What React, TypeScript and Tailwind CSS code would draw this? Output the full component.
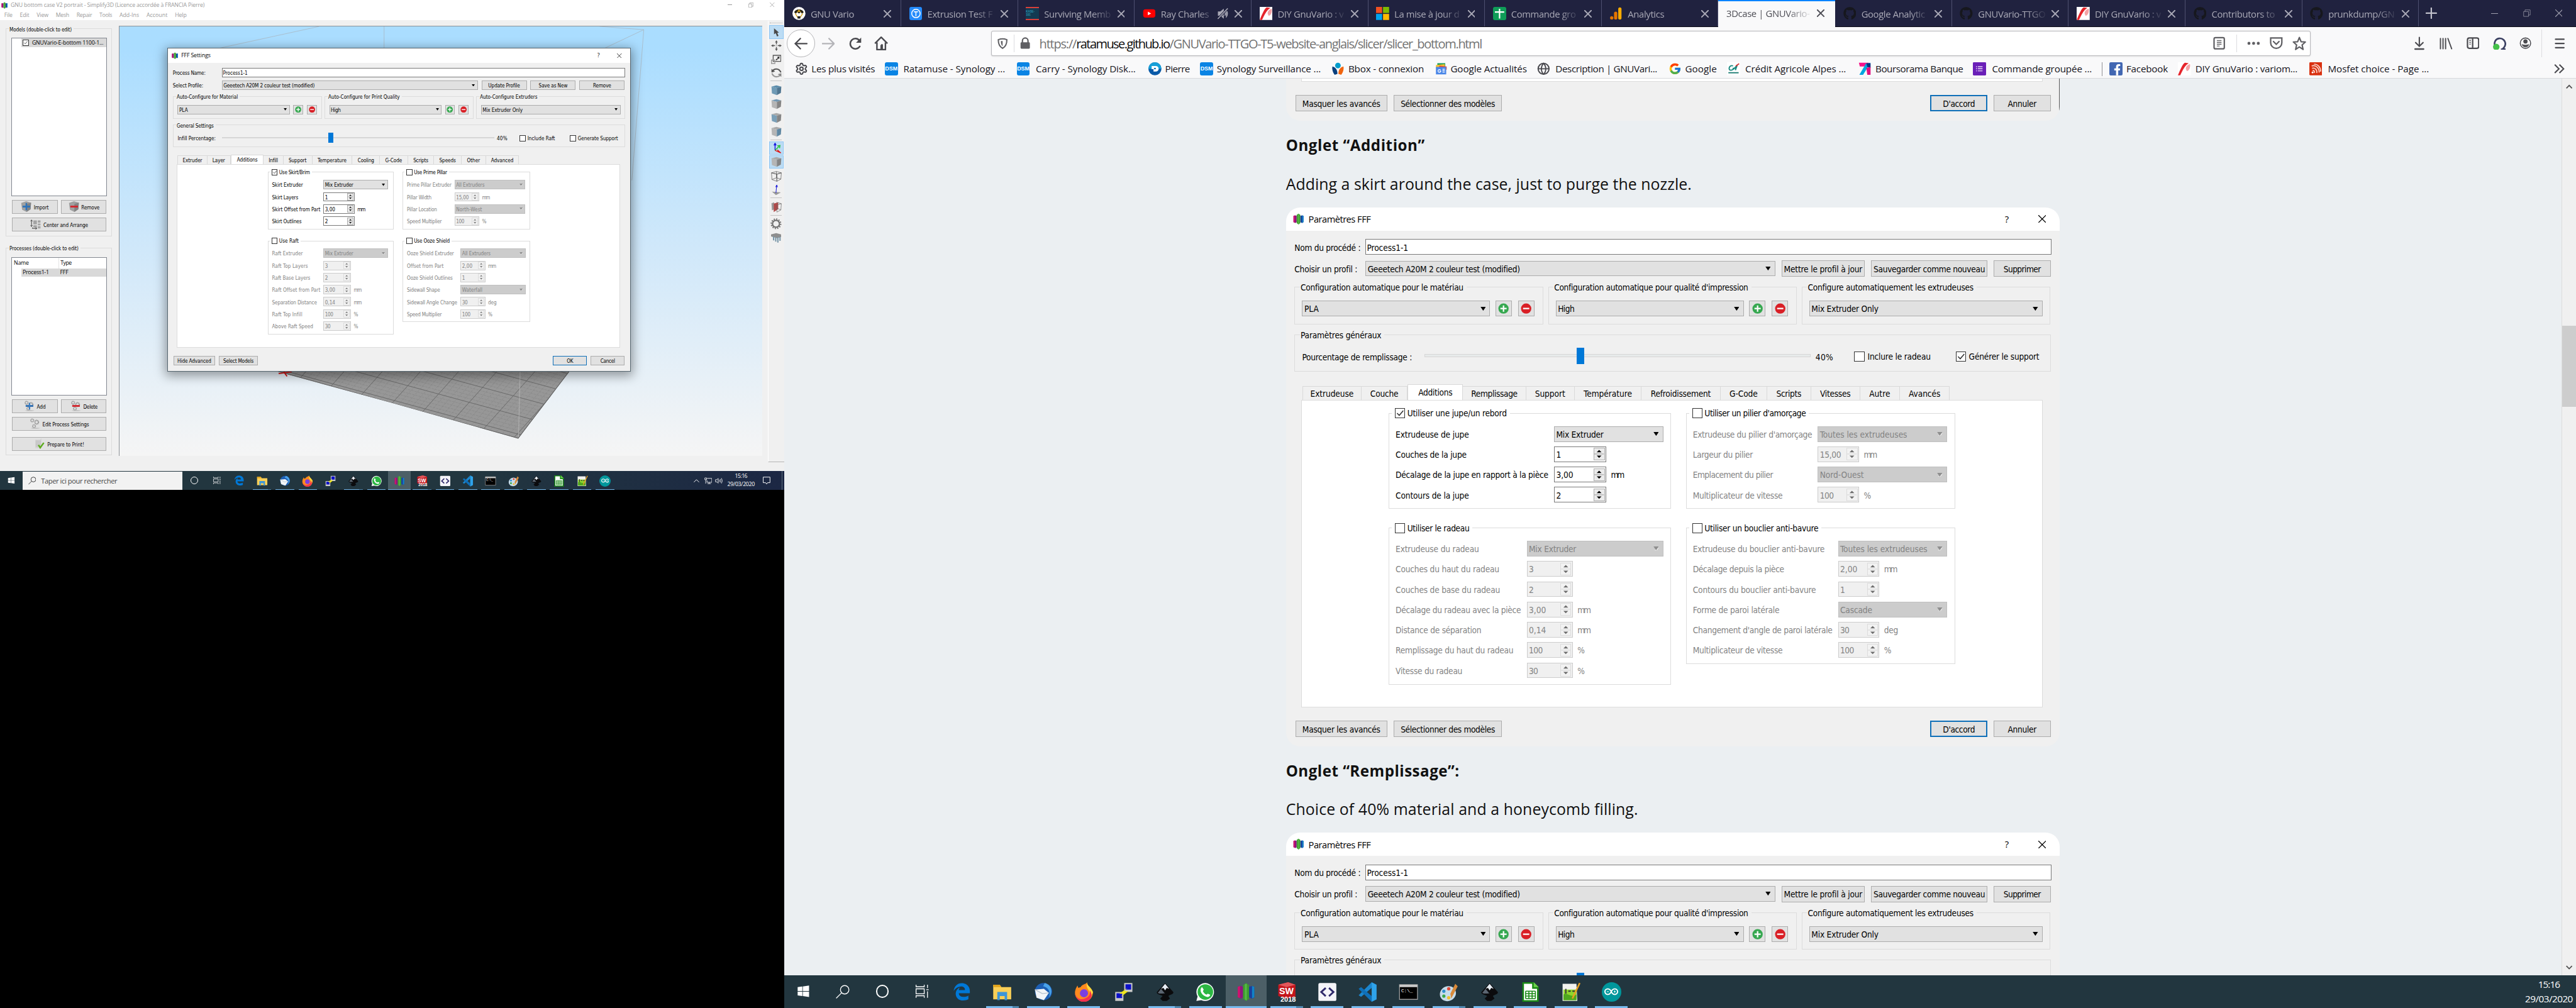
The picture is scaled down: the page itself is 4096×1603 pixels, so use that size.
import React from "react";
import type { ReactNode } from "react";
import { FaWindows, FaGithub, FaEdgeLegacy, FaFacebookF } from "react-icons/fa";
import { FcGoogle } from "react-icons/fc";
import { SiArduino } from "react-icons/si";
import { Globe, Settings } from "lucide-react";

/* ---------- text that is tracked to an exact width ---------- */

const FONTS = {
  ui: { size: 11, css: "'DejaVu Sans Condensed','DejaVu Sans',sans-serif", weight: "", cls: "text-[11px] font-['DejaVu_Sans_Condensed','DejaVu_Sans',sans-serif] [font-stretch:condensed]" },
  seg12: { size: 11.8, css: "'Open Sans',sans-serif", weight: "", cls: "text-[11.8px] font-['Open_Sans',sans-serif]" },
  seg15: { size: 15, css: "'Open Sans',sans-serif", weight: "", cls: "text-[15px] font-['Open_Sans',sans-serif]" },
  seg21: { size: 20.5, css: "'Open Sans',sans-serif", weight: "", cls: "text-[20.5px] font-['Open_Sans',sans-serif]" },
  seg28: { size: 27, css: "'Open Sans',sans-serif", weight: "", cls: "text-[27px] font-['Open_Sans',sans-serif]" },
  body: { size: 33.5, css: "'Open Sans',sans-serif", weight: "", cls: "text-[33.5px] font-['Open_Sans',sans-serif]" },
  head: { size: 32.5, css: "'Open Sans',sans-serif", weight: "bold ", cls: "text-[32.5px] font-bold font-['Open_Sans',sans-serif]" },
};
type FontKey = keyof typeof FONTS;

const ctx = document.createElement("canvas").getContext("2d")!;
function tracking(t: string, w: number, f: FontKey) {
  const font = FONTS[f];
  ctx.font = `${font.weight}100px ${font.css}`;
  const natural = (ctx.measureText(t).width * font.size) / 100;
  return (w - natural) / t.length;
}

type Txt = [string, number];
function T({ v, f = "ui", className = "" }: { v: Txt; f?: FontKey; className?: string }) {
  return (
    <span
      className={`block shrink-0 whitespace-pre leading-[1.25] ${FONTS[f].cls} ${className}`}
      style={{ letterSpacing: `${tracking(v[0], v[1], f)}px` }}
    >
      {v[0]}
    </span>
  );
}

/* ---------- small widgets ---------- */

function S3D({ className = "" }: { className?: string }) {
  return (
    <svg viewBox="0 0 24 24" className={className}>
      <path d="M1 5 5 4 8 5V19L5 21 1 19Z" fill="#8c1580" />
      <path d="M1 5 4 4V20L1 19Z" fill="#d0146e" />
      <path d="M16 5 20 4 23 5V19L20 21 16 19Z" fill="#1b3f9c" />
      <path d="M20 4 23 5V19L20 20.500Z" fill="#1184c8" />
      <path d="M8 3 12 0 16 3V21L12 24 8 21Z" fill="#3c9c2e" />
      <path d="M10.500 1.500 13 1V23.500L10.500 22Z" fill="#58b848" />
    </svg>
  );
}

function Tri({ off = false, className = "" }: { off?: boolean; className?: string }) {
  return (
    <svg viewBox="0 0 8 6" className={`h-[5px] w-[7px] shrink-0 ${className}`}>
      {off && <path d="M1.500 6H5L8.500 1Z" fill="#fff" />}
      <path d="M0 0H8L4 6Z" fill={off ? "#8f8f8f" : "#000"} />
    </svg>
  );
}

function Combo({ v, className = "", off = false }: { v: Txt; className?: string; off?: boolean }) {
  return (
    <div className={`flex h-[20px] shrink-0 items-center justify-between border pr-[5px] pl-[2px] ${off ? "border-[#bfbfbf] bg-[#cccccc] text-[#838383]" : "border-[#adadad] bg-[#e1e1e1] text-black"} ${className}`}>
      <T v={v} className="mt-[2px]" />
      <Tri off={off} />
    </div>
  );
}

function Spin({ v, className = "", off = false }: { v: Txt; className?: string; off?: boolean }) {
  const c = off ? "#6d6d6d" : "#000";
  return (
    <div className={`flex h-[20px] shrink-0 items-center justify-between border pr-[1px] pl-[2px] ${off ? "border-[#cccccc] bg-[#f0f0f0] text-[#838383]" : "border-[#7a7a7a] bg-white text-black"} ${className}`}>
      <T v={v} className="mt-[2px]" />
      <div className={`flex h-[16px] w-[14px] flex-col border ${off ? "border-[#dcdcdc] bg-[#f2f2f2]" : "border-[#adadad] bg-[#ebebeb]"}`}>
        <svg viewBox="0 0 12 14" className="h-full w-full">
          <path d="M3 5 6 2 9 5Z M3 9 6 12 9 9Z" fill={c} />
          <path d="M0 7H12" stroke={off ? "#dcdcdc" : "#adadad"} />
        </svg>
      </div>
    </div>
  );
}

function Check({ on = false }: { on?: boolean }) {
  return (
    <div className="h-[13px] w-[13px] shrink-0 border border-[#333] bg-white">
      {on && (
        <svg viewBox="0 0 12 12" className="h-full w-full">
          <path d="M2 6 5 9 10.500 2.500" fill="none" stroke="#333" strokeWidth="1.300" />
        </svg>
      )}
    </div>
  );
}

function Btn({ v, className = "", primary = false }: { v: Txt; className?: string; primary?: boolean }) {
  return (
    <div className={`flex h-[21px] shrink-0 items-center justify-center bg-[#e1e1e1] ${primary ? "border-2 border-[#0f6fb8]" : "border border-[#adadad]"} ${className}`}>
      <T v={v} className="mt-[2px]" />
    </div>
  );
}

function RoundBtn({ kind }: { kind: "plus" | "minus" }) {
  return (
    <div className="flex h-[20px] w-[21px] shrink-0 items-center justify-center border border-[#adadad] bg-[#e1e1e1]">
      <svg viewBox="0 0 14 14" className="h-[14px] w-[14px]">
        <circle cx="7" cy="7" r="6.600" fill={kind === "plus" ? "#36a850" : "#d91f26"} />
        <path d={kind === "plus" ? "M3 7H11M7 3V11" : "M3 7H11"} stroke="#fff" strokeWidth="1.800" />
      </svg>
    </div>
  );
}

/* Group box whose caption sits on the top border. */
function Group({ v, className = "", bg = "bg-[#f0f0f0]", children, check }: { v: Txt; className?: string; bg?: string; children?: ReactNode; check?: boolean }) {
  const boxed = check !== undefined;
  return (
    <div className={`flex shrink-0 flex-col border border-[#dcdcdc] ${className}`}>
      <div className={`-mt-[8px] flex h-[15px] w-fit items-center gap-[3px] pr-[4px] ${bg} ${boxed ? "ml-[3px] pl-[4px]" : "ml-[6px] pl-[1px]"}`}>
        {boxed && <Check on={check} />}
        <T v={v} className={boxed ? "mt-[1px]" : "mt-[2px]"} />
      </div>
      {children}
    </div>
  );
}

type Row = { l: Txt; v: Txt; k?: "combo"; u?: Txt };
function OptionGroup({ title, on, rows, box, label, combo, spin }: { title: Txt; on?: boolean; rows: Row[]; box: string; label: string; combo: string; spin: string }) {
  const off = !on;
  return (
    <Group v={title} check={!!on} bg="bg-white" className={box}>
      <div className={`mt-[9px] flex flex-col gap-[6px] pl-[8px] ${off ? "text-[#838383]" : "text-black"}`}>
        {rows.map((r) => (
          <div key={r.l[0]} className="flex h-[20px] items-center">
            <div className={`shrink-0 ${label}`}>
              <T v={r.l} className="mt-[2px]" />
            </div>
            {r.k ? <Combo v={r.v} off={off} className={combo} /> : <Spin v={r.v} off={off} className={spin} />}
            {r.u && <T v={r.u} className="mt-[2px] ml-[6px]" />}
          </div>
        ))}
      </div>
    </Group>
  );
}

const MM: Txt = ["mm", 15.8];
const PC: Txt = ["%", 10];
const N = { one: ["1", 6] as Txt, two: ["2", 6] as Txt, three: ["3", 6] as Txt, t3: ["3,00", 22] as Txt, t2: ["2,00", 22] as Txt, sep: ["0,14", 22] as Txt, hun: ["100", 17.5] as Txt, thirty: ["30", 11.5] as Txt, fifteen: ["15,00", 27] as Txt };
const MIX: Txt = ["Mix Extruder", 60.7];

const EN = {
  title: ["FFF Settings", 63] as Txt,
  name: ["Process Name:", 70] as Txt,
  profile: ["Select Profile:", 65] as Txt,
  lw: "w-[105px]",
  b: [["Update Profile", 68], ["Save as New", 61.6], ["Remove", 38.6]] as Txt[],
  bw: ["w-[97px]", "w-[97px]", "w-[97px]"],
  g: [["Auto-Configure for Material", 131], ["Auto-Configure for Print Quality", 153], ["Auto-Configure Extruders", 123]] as Txt[],
  gen: ["General Settings", 79] as Txt,
  infill: ["Infill Percentage:", 81.4] as Txt,
  iw: "w-[95px]", sw: "w-[583px]", knob: "ml-[227px]",
  inc: ["Include Raft", 59] as Txt, incM: "ml-[26px]",
  sup: ["Generate Support", 86] as Txt, supM: "ml-[32px]", supOn: false,
  tabs: [["Extruder", 42, "w-[64px]"], ["Layer", 27, "w-[50px]"], ["Additions", 44, "w-[71px]"], ["Infill", 20, "w-[42px]"], ["Support", 38, "w-[62px]"], ["Temperature", 62, "w-[86px]"], ["Cooling", 35, "w-[59px]"], ["G-Code", 36, "w-[60px]"], ["Scripts", 32, "w-[56px]"], ["Speeds", 35.4, "w-[59px]"], ["Other", 28, "w-[52px]"], ["Advanced", 48, "w-[71px]"]] as [string, number, string][],
  cols: "pl-[193px] gap-[19px]",
  skirt: {
    title: ["Use Skirt/Brim", 66] as Txt, on: true, box: "w-[270px] h-[123px]", label: "w-[110px]", combo: "w-[139px]", spin: "w-[67px]",
    rows: [{ l: ["Skirt Extruder", 66], v: MIX, k: "combo" }, { l: ["Skirt Layers", 56], v: N.one }, { l: ["Skirt Offset from Part", 103.4], v: N.t3, u: MM }, { l: ["Skirt Outlines", 63], v: N.two }] as Row[],
  },
  raft: {
    title: ["Use Raft", 42.3] as Txt, box: "w-[270px] h-[201px]", label: "w-[110px]", combo: "w-[139px]", spin: "w-[59px]",
    rows: [{ l: ["Raft Extruder", 66], v: MIX, k: "combo" }, { l: ["Raft Top Layers", 77], v: N.three }, { l: ["Raft Base Layers", 82], v: N.two }, { l: ["Raft Offset from Part", 103.4], v: N.t3, u: MM }, { l: ["Separation Distance", 96], v: N.sep, u: MM }, { l: ["Raft Top Infill", 65], v: N.hun, u: PC }, { l: ["Above Raft Speed", 88], v: N.thirty, u: PC }] as Row[],
  },
  prime: {
    title: ["Use Prime Pillar", 71] as Txt, box: "w-[274px] h-[123px]", label: "w-[102px]", combo: "w-[152px]", spin: "w-[53px]",
    rows: [{ l: ["Prime Pillar Extruder", 95.3], v: ["All Extruders", 61], k: "combo" }, { l: ["Pillar Width", 52.5], v: N.fifteen, u: MM }, { l: ["Pillar Location", 64.3], v: ["North-West", 55.7], k: "combo" }, { l: ["Speed Multiplier", 74.5], v: N.hun, u: PC }] as Row[],
  },
  ooze: {
    title: ["Use Ooze Shield", 76.6] as Txt, box: "w-[274px] h-[175px]", label: "w-[115px]", combo: "w-[140px]", spin: "w-[53px]",
    rows: [{ l: ["Ooze Shield Extruder", 100.7], v: ["All Extruders", 61], k: "combo" }, { l: ["Offset from Part", 78.7], v: N.t2, u: MM }, { l: ["Ooze Shield Outlines", 98], v: N.one }, { l: ["Sidewall Shape", 70.7], v: ["Waterfall", 43.4], k: "combo" }, { l: ["Sidewall Angle Change", 107.7], v: N.thirty, u: ["deg", 18] }, { l: ["Speed Multiplier", 74.5], v: N.hun, u: PC }] as Row[],
  },
  foot: [["Hide Advanced", 72.3], ["Select Models", 65], ["OK", 13.4], ["Cancel", 31]] as Txt[],
  fw: ["w-[90px]", "w-[83px] ml-[8px]"],
};

const FR: typeof EN = {
  title: ["Paramètres FFF", 79.6],
  name: ["Nom du procédé :", 84.8],
  profile: ["Choisir un profil :", 80.7],
  lw: "w-[91px]",
  b: [["Mettre le profil à jour", 100.6], ["Sauvegarder comme nouveau", 143], ["Supprimer", 47.7]],
  bw: ["w-[107px]", "w-[149px]", "w-[73px]"],
  g: [["Configuration automatique pour le matériau", 209], ["Configuration automatique pour qualité d'impression", 249], ["Configure automatiquement les extrudeuses", 212.8]],
  gen: ["Paramètres généraux", 103.7],
  infill: ["Pourcentage de remplissage :", 141],
  iw: "w-[157px]", sw: "w-[495px]", knob: "ml-[194px]",
  inc: ["Inclure le radeau", 81], incM: "ml-[27px]",
  sup: ["Générer le support", 90.3], supM: "ml-[32px]", supOn: true,
  tabs: [["Extrudeuse", 55.3, "w-[76px]"], ["Couche", 36, "w-[59px]"], ["Additions", 43.6, "w-[71px]"], ["Remplissage", 59.4, "w-[81px]"], ["Support", 38.8, "w-[62px]"], ["Température", 62, "w-[86px]"], ["Refroidissement", 77, "w-[101px]"], ["G-Code", 36, "w-[60px]"], ["Scripts", 32, "w-[56px]"], ["Vitesses", 39, "w-[63px]"], ["Autre", 26.8, "w-[51px]"], ["Avancés", 40.5, "w-[64px]"]],
  cols: "pl-[111px] gap-[19px]",
  skirt: {
    title: ["Utiliser une jupe/un rebord", 127.6], on: true, box: "w-[362px] h-[123px]", label: "w-[203px]", combo: "w-[140px]", spin: "w-[67px]",
    rows: [{ l: ["Extrudeuse de jupe", 94], v: MIX, k: "combo" }, { l: ["Couches de la jupe", 91], v: N.one }, { l: ["Décalage de la jupe en rapport à la pièce", 195.9], v: N.t3, u: MM }, { l: ["Contours de la jupe", 94], v: N.two }],
  },
  raft: {
    title: ["Utiliser le radeau", 79.7], box: "w-[362px] h-[201px]", label: "w-[168px]", combo: "w-[175px]", spin: "w-[59px]",
    rows: [{ l: ["Extrudeuse du radeau", 107], v: MIX, k: "combo" }, { l: ["Couches du haut du radeau", 133], v: N.three }, { l: ["Couches de base du radeau", 134], v: N.two }, { l: ["Décalage du radeau avec la pièce", 160.8], v: N.t3, u: MM }, { l: ["Distance de séparation", 110], v: N.sep, u: MM }, { l: ["Remplissage du haut du radeau", 151], v: N.hun, u: PC }, { l: ["Vitesse du radeau", 85.6], v: N.thirty, u: PC }],
  },
  prime: {
    title: ["Utiliser un pilier d'amorçage", 130], box: "w-[345px] h-[123px]", label: "w-[160px]", combo: "w-[166px]", spin: "w-[53px]",
    rows: [{ l: ["Extrudeuse du pilier d'amorçage", 153], v: ["Toutes les extrudeuses", 112], k: "combo" }, { l: ["Largeur du pilier", 76.8], v: N.fifteen, u: MM }, { l: ["Emplacement du pilier", 102.7], v: ["Nord-Ouest", 56.4], k: "combo" }, { l: ["Multiplicateur de vitesse", 115], v: N.hun, u: PC }],
  },
  ooze: {
    title: ["Utiliser un bouclier anti-bavure", 146], box: "w-[345px] h-[175px]", label: "w-[186px]", combo: "w-[140px]", spin: "w-[53px]",
    rows: [{ l: ["Extrudeuse du bouclier anti-bavure", 169], v: ["Toutes les extrudeuses", 112], k: "combo" }, { l: ["Décalage depuis la pièce", 117], v: N.t2, u: MM }, { l: ["Contours du bouclier anti-bavure", 158], v: N.one }, { l: ["Forme de paroi latérale", 111], v: ["Cascade", 41], k: "combo" }, { l: ["Changement d'angle de paroi latérale", 179], v: N.thirty, u: ["deg", 18] }, { l: ["Multiplicateur de vitesse", 115], v: N.hun, u: PC }],
  },
  foot: [["Masquer les avancés", 100], ["Sélectionner des modèles", 121], ["D'accord", 41], ["Annuler", 36.7]],
  fw: ["w-[118px]", "w-[139px] ml-[8px]"],
};

function CloseX({ className = "" }: { className?: string }) {
  return (
    <svg viewBox="0 0 10 10" className={className}>
      <path d="M0 0 10 10M10 0 0 10" stroke="currentColor" strokeWidth="1" fill="none" />
    </svg>
  );
}

function DialogTop({ d }: { d: typeof EN }) {
  return (
    <>
      <div className="flex h-[30px] shrink-0 items-center bg-white pl-[9px]">
        <S3D className="h-[15px] w-[14px]" />
        <T v={d.title} f="seg12" className="ml-[6px]" />
        <span className="ml-auto w-[8px] text-center font-['Open_Sans',sans-serif] text-[12px] leading-none">?</span>
        <CloseX className="mr-[18px] ml-[36px] h-[10px] w-[10px]" />
      </div>
      <div className="mt-[11px] flex h-[20px] shrink-0 items-center pr-[11px] pl-[11px]">
        <T v={d.name} className={`mt-[2px] ${d.lw}`} />
        <div className="flex h-full flex-1 items-center border border-[#7a7a7a] bg-white pl-[1px]">
          <T v={["Process1-1", 53]} className="mt-[2px]" />
        </div>
      </div>
      <div className="mt-[7px] flex h-[21px] shrink-0 items-center gap-[8px] pr-[12px] pl-[11px]">
        <div className={`-mr-[8px] shrink-0 ${d.lw}`}>
          <T v={d.profile} className="mt-[2px]" />
        </div>
        <Combo v={["Geeetech A20M 2 couleur test (modified)", 195.5]} className="flex-1" />
        {d.b.map((b, i) => (
          <Btn key={b[0]} v={b} className={d.bw[i]} />
        ))}
      </div>
      <div className="mt-[13px] flex h-[48px] shrink-0 gap-[6px] pl-[11px]">
        {d.g.map((g, i) => (
          <Group key={g[0]} v={g} className="h-[48px] w-[319px]">
            <div className="mt-[10px] flex items-center pl-[9px]">
              <Combo v={i === 0 ? ["PLA", 18.5] : i === 1 ? ["High", 21] : ["Mix Extruder Only", 86]} className={i < 2 ? "w-[241px]" : "w-[299px]"} />
              {i < 2 && (
                <div className="ml-[7px] flex gap-[8px]">
                  <RoundBtn kind="plus" />
                  <RoundBtn kind="minus" />
                </div>
              )}
            </div>
          </Group>
        ))}
      </div>
      <Group v={d.gen} className="mt-[13px] ml-[11px] h-[48px] w-[969px]">
        <div className="mt-[7px] flex h-[27px] items-center pl-[9px]">
          <div className={`shrink-0 ${d.iw}`}>
            <T v={d.infill} className="mt-[2px]" />
          </div>
          <div className={`-mt-[2px] flex h-[4px] shrink-0 items-center border border-[#d6d6d6] bg-[#e7eaea] ${d.sw}`}>
            <div className={`h-[21px] w-[10px] shrink-0 bg-[#0078d7] ${d.knob}`} />
          </div>
          <T v={["40%", 22.7]} className="mt-[2px] ml-[6px]" />
          <div className={`flex items-center gap-[4px] ${d.incM}`}>
            <Check />
            <T v={d.inc} className="mt-[1px]" />
          </div>
          <div className={`flex items-center gap-[4px] ${d.supM}`}>
            <Check on={d.supOn} />
            <T v={d.sup} className="mt-[1px]" />
          </div>
        </div>
      </Group>
    </>
  );
}

function DialogTabs({ d }: { d: typeof EN }) {
  return (
    <>
      <div className="mt-[16px] flex h-[21px] shrink-0 items-end pl-[21px]">
        {d.tabs.map(([t, w, cls], i) => (
          <div key={t} className={`flex shrink-0 items-center justify-center border-t border-[#d9d9d9] ${i === 2 ? "h-[21px] border-r border-l bg-white pb-[1px]" : "h-[19px] border-r bg-[#f0f0f0]"} ${i === 0 ? "border-l" : ""} ${cls}`}>
            <T v={[t, w]} className="mt-[1px]" />
          </div>
        ))}
      </div>
      <div className={`-mt-px ml-[20px] flex h-[394px] w-[950px] shrink-0 border border-[#dcdcdc] bg-white pt-[16px] ${d.cols}`}>
        <div className="flex flex-col gap-[24px]">
          <OptionGroup {...d.skirt} />
          <OptionGroup {...d.raft} />
        </div>
        <div className="flex flex-col gap-[24px]">
          <OptionGroup {...d.prime} />
          <OptionGroup {...d.ooze} />
        </div>
      </div>
    </>
  );
}

function DialogFoot({ d }: { d: typeof EN }) {
  return (
    <div className="mt-[17px] flex pr-[12px] pl-[12px]">
      <Btn v={d.foot[0]} className={d.fw[0]} />
      <Btn v={d.foot[1]} className={d.fw[1]} />
      <div className="ml-auto flex gap-[8px]">
        <Btn v={d.foot[2]} primary className="w-[73px]" />
        <Btn v={d.foot[3]} className="w-[73px]" />
      </div>
    </div>
  );
}

function Dialog({ className = "", children }: { className?: string; children: ReactNode }) {
  return <div className={`flex w-[992px] shrink-0 flex-col overflow-hidden bg-[#f0f0f0] text-black ${className}`}>{children}</div>;
}

/* ---------- slicer main window ---------- */

function Cube({ top = "#a9a9a9", left = "#b5b5b5", right = "#858585", wire = false, className = "" }: { top?: string; left?: string; right?: string; wire?: boolean; className?: string }) {
  const st = wire ? { stroke: "#555", strokeWidth: 1, fill: "none" } : {};
  return (
    <svg viewBox="0 0 24 24" className={`h-[23px] w-[23px] ${className}`}>
      <path d="M1 4 12 1 23 4 13 7Z" fill={top} {...st} />
      <path d="M1 4 13 7V23L2 19Z" fill={left} {...st} />
      <path d="M13 7 23 4 22 18 13 23Z" fill={right} {...st} />
      {wire && <path d="M12 1V15M2 19 12 15 22 18" {...st} />}
    </svg>
  );
}

function Gear({ cx, cy, r }: { cx: number; cy: number; r: number }) {
  return <circle cx={cx} cy={cy} r={r} fill="none" stroke="#9a9a9a" strokeWidth={r * 0.7} strokeDasharray={`${r * 0.55} ${r * 0.15}`} />;
}

function Gears({ sign }: { sign?: "plus" | "minus" }) {
  return (
    <svg viewBox="0 0 24 24" className="h-[23px] w-[23px]">
      <Gear cx={6} cy={5} r={3.2} />
      <Gear cx={16} cy={9} r={4} />
      <Gear cx={10} cy={18} r={3.2} />
      <ellipse cx="13" cy="22.500" rx="10" ry="1" fill="#bbb" />
      {sign && <path d="M4 12H21" stroke={sign === "plus" ? "#2f6fb3" : "#d2242c"} strokeWidth="4" />}
      {sign === "plus" && <path d="M12.500 5V20" stroke="#3a7cc0" strokeWidth="3" />}
    </svg>
  );
}

function BoxSign({ sign }: { sign: "plus" | "minus" }) {
  return (
    <svg viewBox="0 0 24 24" className="h-[23px] w-[23px]">
      <path d="M1 4 12 0 23 3 22 18 13 24 3 19Z" fill="#a0a0a0" />
      <path d="M13 6 23 3 22 18 13 24Z" fill="#838383" />
      <path d="M4 12H21" stroke={sign === "plus" ? "#2f74ba" : "#d2242c"} strokeWidth="4" />
      {sign === "plus" && <path d="M12.500 4V20" stroke="#2f74ba" strokeWidth="3.500" />}
    </svg>
  );
}

function PanelBtn({ icon, v, className = "" }: { icon: ReactNode; v: Txt; className?: string }) {
  return (
    <div className={`flex h-[30px] shrink-0 items-center justify-center gap-[5px] border border-[#adadad] bg-[#e1e1e1] ${className}`}>
      {icon}
      <T v={v} className="mt-[3px]" />
    </div>
  );
}

/* Build plate: one line family climbs to the right, the other runs to the left. */
const climb = (i: number) => `M${846.5 - i * 65.5} ${880 - i * 18.2}l170 -190`;
const across = (i: number) => `M${860.5 + i * 24.5} ${875.5 - i * 33}l-700 -190`;
const MAJOR = Array.from({ length: 12 }, (_, i) => i);
const MINOR = Array.from({ length: 60 }, (_, i) => i / 5);

function Scene() {
  return (
    <svg viewBox="0 0 1377 921" className="h-[921px] w-[1377px]" fill="none">
      <defs>
        <clipPath id="plate"><path d="M325 736 338 739.500 584 807 714 843.500 854.500 883.500 964 740 964 700 325 700Z" /></clipPath>
      </defs>
      <path d="M208 48 428 0M567 0V48M1029 0 1123.500 7 1037 48M1123.500 7 1098 330" stroke="#a9b4bc" />
      <g clipPath="url(#plate)">
        <rect x="300" y="700" width="680" height="190" fill="#979797" />
        <path d={MINOR.map(climb).join("")} stroke="#868686" strokeWidth="0.900" strokeDasharray="5 2" />
        <path d={MINOR.map(across).join("")} stroke="#868686" strokeWidth="0.900" strokeDasharray="5 2" />
        <path d={MAJOR.map(climb).join("")} stroke="#686868" strokeWidth="1.200" />
        <path d={MAJOR.map(across).join("")} stroke="#686868" strokeWidth="1.200" />
        <path d="M338 739.500 854.500 883.500 964 740" stroke="#606060" strokeWidth="3" />
      </g>
      <path d="M858.500 740 855 880" stroke="#bdbdbd" />
      <path d="M341 744 369 740M352 740 359 750" stroke="#d81111" strokeWidth="2.500" />
    </svg>
  );
}

function ToolSlot({ children, on = false, className = "" }: { children: ReactNode; on?: boolean; className?: string }) {
  return <div className={`flex h-[29px] w-[31px] shrink-0 items-center justify-center ${on ? "border border-[#90c8f6] bg-[#bcdcf4]" : ""} ${className}`}>{children}</div>;
}
const Sep = () => <div className="my-[1px] h-px w-[25px] shrink-0 bg-[#c5c5c5]" />;

function Slicer() {
  return (
    <div className="flex h-[1010px] flex-col bg-[#f0f0f0]">
      <div className="flex h-[43px] shrink-0 flex-col bg-white text-[#999]">
        <div className="flex h-[24px] items-center pl-[3px]">
          <S3D className="h-[15px] w-[14px]" />
          <T v={["GNU bottom case V2 portrait - Simplify3D (Licence accordée à FRANCIA Pierre)", 415.6]} f="seg12" className="ml-[6px]" />
          <div className="-mt-[3px] ml-auto flex items-center pr-[20px]">
            <div className="h-px w-[10px] bg-[#999]" />
            <svg viewBox="0 0 11 11" className="ml-[34px] h-[11px] w-[11px]" fill="none" stroke="#999"><path d="M.5 3H7.500V10.500H.5ZM3 3V.5H10.500V8H7.500" /></svg>
            <CloseX className="ml-[36px] h-[10px] w-[10px]" />
          </div>
        </div>
        <div className="flex h-[19px] items-center gap-[16px] pl-[9px]">
          {([["File", 17.6], ["Edit", 20], ["View", 25], ["Mesh", 28.5], ["Repair", 33], ["Tools", 27], ["Add-Ins", 42], ["Account", 45], ["Help", 25]] as Txt[]).map((m) => (
            <T key={m[0]} v={m} f="seg12" />
          ))}
        </div>
      </div>
      <div className="flex flex-1">
        <div className="flex w-[255px] shrink-0 flex-col pt-[18px] pl-[12px]">
          <Group v={["Models (double-click to edit)", 133.4]} className="h-[446px] w-[228px]">
            <div className="mt-[12px] ml-[11px] flex h-[339px] w-[205px] flex-col border border-[#828790] bg-white">
              <div className="ml-[20px] flex h-[18px] items-center gap-[7px] bg-[#d9d9d9] pl-[3px]">
                <Check on />
                <T v={["GNUVario-E-bottom 1100-1...", 153]} f="seg12" />
              </div>
            </div>
            <div className="mt-[8px] ml-[12px] flex gap-[8px]">
              <PanelBtn icon={<BoxSign sign="plus" />} v={["Import", 31.6]} className="w-[98px]" />
              <PanelBtn icon={<BoxSign sign="minus" />} v={["Remove", 39]} className="w-[97px]" />
            </div>
            <PanelBtn
              className="mt-[8px] ml-[12px] w-[203px]"
              v={["Center and Arrange", 96]}
              icon={
                <svg viewBox="0 0 24 24" className="h-[23px] w-[23px]">
                  <path d="M7 2H15V11H7ZM17 2H23V7H17ZM17 9H23V13H17ZM7 13H15V18H7ZM17 15H23V20H17Z" fill="#a3a3a3" />
                  <path d="M3 3V14M1 4 3 1 5 4M1 13 3 16 5 13M5 18V20H14M12 18 15 20 12 22" fill="none" stroke="#333" strokeWidth="1.300" />
                </svg>
              }
            />
          </Group>
          <Group v={["Processes (double-click to edit)", 148]} className="mt-[24px] h-[445px] w-[228px]">
            <div className="mt-[12px] ml-[11px] flex h-[296px] w-[205px] flex-col border border-[#828790] bg-white">
              <div className="flex h-[23px] items-center">
                <T v={["Name", 32]} f="seg12" className="w-[99px] pl-[4px]" />
                <div className="h-full w-px bg-[#e5e5e5]" />
                <T v={["Type", 23.6]} f="seg12" className="pl-[4px]" />
              </div>
              <div className="ml-[20px] flex h-[17px] items-center bg-[#d9d9d9]">
                <T v={["Process1-1", 56]} f="seg12" className="w-[83px] pl-[3px]" />
                <T v={["FFF", 17.7]} f="seg12" />
              </div>
            </div>
            <div className="mt-[8px] ml-[12px] flex gap-[8px]">
              <PanelBtn icon={<Gears sign="plus" />} v={["Add", 18.7]} className="w-[98px]" />
              <PanelBtn icon={<Gears sign="minus" />} v={["Delete", 30.5]} className="w-[97px]" />
            </div>
            <PanelBtn icon={<Gears />} v={["Edit Process Settings", 100]} className="mt-[8px] ml-[12px] w-[203px]" />
            <PanelBtn
              className="mt-[13px] ml-[12px] w-[203px]"
              v={["Prepare to Print!", 79]}
              icon={
                <svg viewBox="0 0 24 24" className="h-[23px] w-[23px]">
                  <path d="M3 3H13L17 0V22H3Z" fill="#d5d5d5" />
                  <path d="M5 5V20M8 5V20M11 5V20M14 5V20" stroke="#a5a5a5" strokeWidth="1.200" strokeDasharray="1.500 1" />
                  <path d="M10 15 14 21 22 10" fill="none" stroke="#5cab1d" strokeWidth="3.500" />
                </svg>
              }
            />
          </Group>
        </div>
        <div className="mt-[12px] h-[922px] w-[1378px] shrink-0 overflow-hidden border-t border-l border-[#8c9196] bg-linear-to-b from-[#aaddff] from-5% via-[#d0e8fa] via-52% to-[#f5f5f5]">
          <Scene />
        </div>
        <div className="mt-[2px] ml-auto flex h-[945px] w-[35px] flex-col items-center border-b border-l border-b-[#b5b5b5] border-l-white pt-[3px]">
          <div className="mb-[4px] h-[2px] w-[26px] border-t-2 border-dotted border-[#b0b0b0]" />
          <ToolSlot on>
            <svg viewBox="0 0 24 24" className="h-[22px] w-[22px]"><path d="M7 3V17L11 14.500 14 22 17.500 20.500 14.500 13.500 18.500 13Z" fill="#4a4a4a" /></svg>
          </ToolSlot>
          <ToolSlot>
            <svg viewBox="0 0 24 24" className="h-[23px] w-[23px]" fill="#555"><path d="M12 0 15 5H13V9H11V5H9ZM12 24 9 19H11V15H13V19H15ZM0 12 5 9V11H9V13H5V15ZM24 12 19 15V13H15V11H19V9Z" /><path d="M11 11H13V13H11Z" fill="#999" /></svg>
          </ToolSlot>
          <ToolSlot>
            <svg viewBox="0 0 24 24" className="h-[22px] w-[22px]" fill="none"><path d="M5 3H23V17H5Z" stroke="#555" strokeWidth="2" /><path d="M1 14H9V22H1Z" stroke="#999" strokeWidth="2" /><path d="M11 13 16 9 14 7 20 5 19 12 17 10 13 15Z" fill="#333" /></svg>
          </ToolSlot>
          <ToolSlot className="h-[31px]">
            <svg viewBox="0 0 24 24" className="h-[24px] w-[23px]" fill="none" strokeWidth="3"><path d="M3 10C4 3 17-1 22 11" stroke="#555" /><path d="M1 3V11L9 9Z" fill="#555" /><path d="M21 14C20 21 7 25 2 13" stroke="#999" /><path d="M23 21V13L15 15Z" fill="#888" /></svg>
          </ToolSlot>
          <Sep />
          <ToolSlot className="mt-[3px] h-[30px]"><Cube top="#5b8cab" left="#6f9ab5" right="#4f7691" /></ToolSlot>
          <ToolSlot className="h-[30px]"><Cube top="#7398b3" /></ToolSlot>
          <ToolSlot className="h-[30px]"><Cube left="#7a9fb7" /></ToolSlot>
          <ToolSlot className="h-[30px]"><Cube right="#6088a3" /></ToolSlot>
          <Sep />
          <ToolSlot on className="mt-[2px]">
            <svg viewBox="0 0 24 24" className="h-[23px] w-[23px]" fill="none" strokeWidth="2"><path d="M9 17V3M6.500 6 9 1 11.500 6" stroke="#1818e0" /><path d="M9 17 18 8M14 7 20 6 19 12" stroke="#1fc02f" /><path d="M9 17 20 22M14 16 22 23" stroke="#e01a1a" /></svg>
          </ToolSlot>
          <ToolSlot on className="mt-[1px]"><Cube /></ToolSlot>
          <ToolSlot className="mt-[2px]"><Cube wire /></ToolSlot>
          <ToolSlot>
            <svg viewBox="0 0 24 24" className="h-[23px] w-[23px]" fill="none"><path d="M2 15 22 17 11 23Z" fill="#999" /><path d="M11 18 12.500 2M10.500 5 12.800 0 14.500 5" stroke="#2020d8" strokeWidth="1.500" /></svg>
          </ToolSlot>
          <Sep />
          <ToolSlot className="mt-[4px] h-[31px]">
            <svg viewBox="0 0 24 24" className="h-[23px] w-[23px]"><path d="M1 3 7 1V17L2 19Z" fill="#999" /><path d="M6 4 16 1V16L6 23Z" fill="#b04a4a" /><path d="M12 1 23 4 22 18 13 23V7L23 4M13 14 22 18" fill="none" stroke="#666" /></svg>
          </ToolSlot>
          <Sep />
          <ToolSlot className="mt-[2px] h-[31px]">
            <svg viewBox="0 0 24 24" className="h-[24px] w-[24px]" fill="none" stroke="#6f6f6f"><circle cx="12" cy="12" r="7.500" strokeWidth="3" /><circle cx="12" cy="12" r="10.200" strokeWidth="2.600" strokeDasharray="2.670 2.670" /></svg>
          </ToolSlot>
          <ToolSlot>
            <svg viewBox="0 0 24 24" className="h-[22px] w-[22px]"><path d="M0 4 12 1 24 4V10L14 13 0 9Z" fill="#8e8e8e" /><path d="M6 9V18M11 11V21M16 11V23M21 10V19" stroke="#7896a8" strokeWidth="3" /></svg>
          </ToolSlot>
        </div>
      </div>
    </div>
  );
}

/* ---------- taskbar ---------- */

const I = "h-[24px] w-[24px]";
const Inkscape = () => (
  <svg viewBox="0 0 24 24" className={I}>
    <path d="M12 1 22 12C23 15 18 15 16 17L18 20 14 23H9L6 20 9 17C6 15 1 15 2 12Z" fill="#0b0b0d" />
    <path d="M12 2 17 8 14 7 12 10 10 7 7 8Z" fill="#e8eef5" />
    <path d="M7 8 3 13C7 15 10 13 12 14" fill="#5b6571" />
  </svg>
);
const TASKS: { id: string; icon: ReactNode; run?: 0 | 1 | 2 | 3 }[] = [
  { id: "edge", run: 0, icon: <FaEdgeLegacy className="h-[22px] w-[22px] text-[#0078d7]" /> },
  { id: "files", run: 2, icon: <svg viewBox="0 0 24 24" className={I}><path d="M1 3H9L11 6H23V21H1Z" fill="#f9cf57" /><path d="M1 3H9L11 6H1Z" fill="#e0a31c" /><path d="M6 12H18V22H15V17H9V22H6Z" fill="#3d96d8" /></svg> },
  { id: "thunderbird", run: 1, icon: <svg viewBox="0 0 24 24" className={I}><circle cx="12.500" cy="11.500" r="10.500" fill="#1d5fb4" /><path d="M14 1C22 3 25 12 19 19 22 12 18 6 12 5Z" fill="#4aa3ea" /><path d="M2 9 13 8 19 13 13 22 4 19Z" fill="#f2f5f8" /><path d="M2 9 11 14 19 13" fill="none" stroke="#b6c2cf" /></svg> },
  { id: "firefox", run: 1, icon: <svg viewBox="0 0 24 24" className={I}><path d="M16 0C15 4 21 6 23 12 23 19 18 24 12 24S1 19 1 13C1 9 3 6 4 4L5 7 8 6C10 2 14 3 16 0Z" fill="#ff8a1e" /><path d="M16 0C15 4 21 6 23 12 22 17 19 16 19 12 17 8 14 6 16 0Z" fill="#ffd93b" /><circle cx="12" cy="13.500" r="5" fill="#7b3fe0" /><path d="M1 13C2 20 8 22 13 20 19 18 20 14 19 10 24 16 20 24 12 24 5 24 1 18 1 13Z" fill="#f5304f" /></svg> },
  { id: "putty", run: 0, icon: <svg viewBox="0 0 24 24" className={I}><path d="M12 1H22V12H12ZM1 12H11V23H1Z" fill="#c9c9c9" /><path d="M13.500 2.500H20.500V9H13.500ZM2.500 13.500H9.500V19.500H2.500Z" fill="#0b10c9" /><path d="M16 7 6 14H11L8 18 17 11H12Z" fill="#f2e818" /></svg> },
  { id: "inkscape", run: 2, icon: <Inkscape /> },
  { id: "whatsapp", run: 1, icon: <svg viewBox="0 0 24 24" className={I}><path d="M12 1A11 11 0 1 1 7 22L1 23 2.500 17.500A11 11 0 0 1 12 1Z" fill="#fff" /><circle cx="12" cy="12" r="9.500" fill="#2cb742" /><path d="M8 6 10 9 9 11C10 13 11.500 14.500 13.500 15.300L15 14 18 15.500C17.500 18 15 18.500 13 17.800 9.500 16.500 7 14 6.300 11 6 8.500 6.500 6.800 8 6Z" fill="#fff" /></svg> },
  { id: "s3d", run: 3, icon: <S3D className="h-[24px] w-[22px]" /> },
  { id: "solidworks", run: 2, icon: <svg viewBox="0 0 24 24" className={I}><path d="M2 3 14 0 23 3V18L12 20 2 17Z" fill="#c4161c" /><path d="M2 3 14 0 23 3 12 6Z" fill="#e2575b" /><text x="12" y="14.500" textAnchor="middle" fontSize="11" fontWeight="bold" fontFamily="Liberation Sans" fill="#fff">SW</text><text x="14" y="23.500" textAnchor="middle" fontSize="8.500" fontWeight="bold" fontFamily="Liberation Sans" fill="#fff">2018</text></svg> },
  { id: "dev", run: 1, icon: <svg viewBox="0 0 24 24" className={I}><rect x="1" y="1" width="22" height="22" rx="2" fill="#f4f4f8" /><path d="M10 7 4.500 12 10 17M14 7 19.500 12 14 17" fill="none" stroke="#2f2a6b" strokeWidth="2.200" /></svg> },
  { id: "code", run: 1, icon: <svg viewBox="0 0 24 24" className={I}><path d="M17 0 23 3V21L17 24Z" fill="#2fa3ea" /><path d="M17 0V7L4 18 1 16Z" fill="#1b86cf" /><path d="M17 24V17L4 6 1 8Z" fill="#0f6fb8" /></svg> },
  { id: "cmd", run: 1, icon: <svg viewBox="0 0 24 24" className={I}><path d="M1 3H23V21H1Z" fill="#000" stroke="#9a9a9a" /><path d="M1 3H23V6H1Z" fill="#c9c9c9" /><text x="3" y="12" fontSize="6" fontFamily="Liberation Mono" fill="#fff">C:\_</text></svg> },
  { id: "paint", run: 2, icon: <svg viewBox="0 0 24 24" className={I}><ellipse cx="11" cy="14" rx="10" ry="9" fill="#c7dcea" transform="rotate(-25 11 14)" /><circle cx="6" cy="11" r="2" fill="#2f8fd0" /><circle cx="12" cy="8" r="2" fill="#e04a3a" /><circle cx="6" cy="17" r="2" fill="#3aa84a" /><circle cx="12" cy="19" r="2" fill="#f0c030" /><path d="M20 2 23 5 15 20 14 14Z" fill="#d98a3a" /></svg> },
  { id: "inkscape2", run: 1, icon: <Inkscape /> },
  { id: "calc", run: 1, icon: <svg viewBox="0 0 24 24" className={I}><path d="M2 0H16L22 6V24H2Z" fill="#1a8a16" /><path d="M4 2H14V8H20V22H4Z" fill="#fff" /><path d="M6 11H18M6 14H18M6 17H18M6 20H18M6 11V20M10 11V20M14 11V20M18 11V20" stroke="#1a8a16" strokeWidth="1.200" /><path d="M16 0 22 6H16Z" fill="#6cd04c" /></svg> },
  { id: "npp", run: 1, icon: <svg viewBox="0 0 24 24" className={I}><path d="M2 2H19L20 23H2Z" fill="#f2f2ee" /><path d="M3 9H19L19 22H3Z" fill="#8fd62c" /><path d="M3 15C8 12 12 20 19 15V22H3Z" fill="#4fa81e" /><path d="M6 8V14M9 11H12M14 11H17" stroke="#333" strokeWidth="1.500" /><path d="M23 1 14 20" stroke="#e8a020" strokeWidth="2" /></svg> },
  { id: "arduino", run: 1, icon: <span className="flex h-[24px] w-[24px] items-center justify-center rounded-full bg-[#00979c]"><SiArduino className="h-[17px] w-[17px] text-white" /></span> },
];

function Clock({ className = "" }: { className?: string }) {
  return (
    <div className={`flex flex-col items-center gap-[3px] ${className}`}>
      <T v={["15:16", 26.5]} f="seg12" />
      <T v={["29/03/2020", 58.4]} f="seg12" />
    </div>
  );
}

function Taskbar({ wide = false, slot, start, className = "" }: { wide?: boolean; slot: string; start: ReactNode; className?: string }) {
  return (
    <div className={`flex h-[40px] shrink-0 items-center text-white ${className}`}>
      <div className="flex w-[48px] shrink-0 items-center justify-center"><FaWindows className="h-[16px] w-[16px]" /></div>
      {start}
      <div className={`flex shrink-0 items-center justify-center ${wide ? "w-[49px]" : "w-[48px]"}`}>
        <div className="h-[16px] w-[16px] rounded-full border-2 border-white" />
      </div>
      <div className="flex w-[48px] shrink-0 items-center justify-center">
        <svg viewBox="0 0 18 16" className="h-[16px] w-[18px]" fill="none" stroke="#fff"><path d="M2 0V2.500H12V0M2 5H12V11H2ZM2 16V13.500H12V16M16 0V4M16 8V16M14.500 6H17.500" /></svg>
      </div>
      {TASKS.map((t) => (
        <div key={t.id} className={`flex h-[40px] shrink-0 flex-col items-center ${slot} ${t.run === 3 ? "bg-[#4c5f67]" : ""}`}>
          <div className="flex h-[38px] items-center pt-[3px]">{t.icon}</div>
          {!!t.run && (
            <div className={`flex h-[2px] justify-end bg-[#76b9ed] ${t.run === 3 ? "w-full" : "w-[40px]"}`}>{t.run === 2 && <div className="h-full w-[8px] bg-[#4f86ad]" />}</div>
          )}
        </div>
      ))}
      {wide ? (
        <Clock className="mr-[4px] ml-auto" />
      ) : (
        <div className="ml-auto flex items-center">
          <svg viewBox="0 0 12 7" className="h-[7px] w-[12px]" fill="none" stroke="#fff"><path d="M.5 6.500 6 1 11.500 6.500" strokeWidth="1.300" /></svg>
          <svg viewBox="0 0 18 16" className="ml-[10px] h-[15px] w-[17px]" fill="none" stroke="#fff" strokeWidth="1.200"><path d="M6 2.500H17V11.500H6V7M11 11.500V14.500M7 14.500H15M1 1.500H5V5.500H1ZM3 5.500V14.500" /></svg>
          <svg viewBox="0 0 18 16" className="ml-[7px] h-[15px] w-[17px]" fill="none" stroke="#fff" strokeWidth="1.200"><path d="M1 5.500H4L7 2.500V13.500L4 10.500H1ZM9.500 5.500Q11 8 9.500 10.500M12 4Q14.500 8 12 12M14.500 2Q18.500 8 14.500 14" /></svg>
          <Clock className="ml-[9px]" />
          <svg viewBox="0 0 16 17" className="mr-[24px] ml-[18px] h-[17px] w-[16px]" fill="none" stroke="#fff" strokeWidth="1.300"><path d="M.7 1H15.300V13H10L8 16 6 13H.7Z" /></svg>
          <div className="mr-[4px] h-[40px] w-px bg-[#5f7080]" />
        </div>
      )}
    </div>
  );
}

/* ---------- browser ---------- */

const Sq = ({ c, children }: { c: string; children?: ReactNode }) => <span className={`flex h-[28px] w-[28px] shrink-0 items-center justify-center overflow-hidden rounded-[4px] ${c}`}>{children}</span>;
const Diy = () => (
  <svg viewBox="0 0 28 28" className="h-[28px] w-[28px] shrink-0"><rect width="28" height="28" fill="#fff" /><path d="M0 28C6 14 10 4 15 1L23 2C14 8 10 18 5 28Z" fill="#e5242b" /><path d="M17 14C17 8 22 5 26 4 27 12 24 18 19 19Z" fill="#f4a3a6" /></svg>
);
const Dsm = () => <Sq c="bg-[#0a84e4]"><span className="font-['Liberation_Sans'] text-[12px] leading-none font-bold text-white">DSM</span></Sq>;
const Git = () => <FaGithub className="h-[28px] w-[28px] shrink-0 text-[#16171d]" />;

const TABS: { t: string; icon?: ReactNode; muted?: boolean; on?: boolean }[] = [
  { t: "GNU Vario", icon: <svg viewBox="0 0 28 28" className="h-[28px] w-[28px]"><circle cx="14" cy="14" r="14" fill="#fff" /><path d="M4 12C5 3 23 3 24 12L20 14 18 11 14 14 10 11 8 14Z" fill="#2a2412" /><path d="M9 12 14 5 19 12 14 10Z" fill="#d9a520" /><path d="M6 14 11 22H17L22 14" stroke="#d9a520" strokeWidth="2" fill="none" /><path d="M11 20H17V25H11Z" fill="#222" /></svg> },
  { t: "Extrusion Test F", icon: <Sq c="bg-[#248bfb]"><svg viewBox="0 0 28 28" className="h-[28px] w-[28px]" fill="none" stroke="#fff" strokeWidth="2"><circle cx="14" cy="14" r="9" /><path d="M9.500 10.500H18.500M14 10.500V20" /></svg></Sq> },
  { t: "Surviving Memb", icon: <span className="flex h-[28px] w-[28px] shrink-0 flex-col items-center justify-center border-y-4 border-[#d9403a] bg-[#123a52] font-['Liberation_Sans'] text-[6px] leading-none font-bold text-[#2a93b0]">KASE-101</span> },
  { t: "Ray Charles", muted: true, icon: <svg viewBox="0 0 28 28" className="h-[28px] w-[28px]"><rect x="1" y="5" width="26" height="18" rx="5" fill="#f00" /><path d="M11 10 18 14 11 18Z" fill="#fff" /></svg> },
  { t: "DIY GnuVario : v", icon: <Diy /> },
  { t: "La mise à jour d", icon: <svg viewBox="0 0 28 28" className="h-[28px] w-[28px]"><path d="M0 0H13V13H0Z" fill="#f25022" /><path d="M15 0H28V13H15Z" fill="#7fba00" /><path d="M0 15H13V28H0Z" fill="#00a4ef" /><path d="M15 15H28V28H15Z" fill="#ffb900" /></svg> },
  { t: "Commande gro", icon: <Sq c="bg-[#0f9d58]"><svg viewBox="0 0 28 28" className="h-[28px] w-[28px]" stroke="#fff" strokeWidth="3"><path d="M14 4V25M4 11H24" /></svg></Sq> },
  { t: "Analytics", icon: <svg viewBox="0 0 28 28" className="h-[28px] w-[28px]"><rect x="19" y="1" width="7" height="26" rx="3.500" fill="#f9ab00" /><rect x="10" y="10" width="7" height="17" rx="3.500" fill="#e37400" /><circle cx="5" cy="23.500" r="3.500" fill="#e37400" /></svg> },
  { t: "3Dcase | GNUVario-", on: true },
  { t: "Google Analytic", icon: <Git /> },
  { t: "GNUVario-TTGO", icon: <Git /> },
  { t: "DIY GnuVario : v", icon: <Diy /> },
  { t: "Contributors to", icon: <Git /> },
  { t: "prunkdump/GN", icon: <Git /> },
];

const MARKS: { v: Txt; icon: ReactNode; m: string; g: string; sep?: boolean }[] = [
  { v: ["Les plus visités", 136], m: "ml-[23px]", g: "gap-[8px]", icon: <Settings className="h-[28px] w-[28px] shrink-0 text-[#4a4a4f]" strokeWidth={2.4} /> },
  { v: ["Ratamuse - Synology ...", 218], m: "ml-[21px]", g: "gap-[12px]", icon: <Dsm /> },
  { v: ["Carry - Synology Disk...", 214], m: "ml-[25px]", g: "gap-[13px]", icon: <Dsm /> },
  { v: ["Pierre", 53], m: "ml-[27px]", g: "gap-[8px]", icon: <svg viewBox="0 0 28 28" className="h-[28px] w-[28px] shrink-0"><circle cx="14" cy="14" r="14" fill="#0a5aa8" /><path d="M14 0A14 14 0 0 1 28 14H0A14 14 0 0 1 14 0Z" fill="#17a0d8" /><path d="M7 8H16A6 6 0 0 1 16 20H11V15H7Z" fill="#fff" /><path d="M12 12H16V15H12Z" fill="#1478bd" /></svg> },
  { v: ["Synology Surveillance ...", 223], m: "ml-[22px]", g: "gap-[8px]", icon: <Dsm /> },
  { v: ["Bbox - connexion", 162], m: "ml-[23px]", g: "gap-[8px]", icon: <svg viewBox="0 0 28 28" className="h-[28px] w-[28px] shrink-0"><circle cx="14" cy="7" r="6" fill="#009dcc" /><path d="M2 9C8 10 13 15 13 25L7 27C3 22 1 15 2 9Z" fill="#0a3f7d" /><path d="M26 9C20 10 15 15 15 25L21 27C25 22 27 15 26 9Z" fill="#f0640f" /></svg> },
  { v: ["Google Actualités", 164], m: "ml-[23px]", g: "gap-[6px]", icon: <svg viewBox="0 0 28 28" className="h-[28px] w-[28px] shrink-0"><path d="M6 2H23V12H6Z" fill="#1e9e58" /><path d="M3 6 22 4V14H3Z" fill="#f6c12d" /><path d="M10 7 26 9V16H10Z" fill="#ea4335" /><path d="M3 10H25V26H3Z" fill="#4a86e8" /><path d="M17 15H22M17 18H22M17 21H22M13 17A3 3 0 1 0 13.500 19H11" stroke="#fff" strokeWidth="1.600" fill="none" /></svg> },
  { v: ["Description | GNUVari...", 218], m: "ml-[22px]", g: "gap-[11px]", icon: <Globe className="h-[28px] w-[28px] shrink-0 text-[#4a4a4f]" strokeWidth={2.2} /> },
  { v: ["Google", 68], m: "ml-[25px]", g: "gap-[7px]", icon: <FcGoogle className="h-[28px] w-[28px] shrink-0" /> },
  { v: ["Crédit Agricole Alpes ...", 216], m: "ml-[22px]", g: "gap-[11px]", icon: <svg viewBox="0 0 28 28" className="h-[28px] w-[28px] shrink-0" fill="none"><rect width="28" height="28" fill="#fff" /><path d="M13 8C5 4 1 18 9 17 15 16 19 9 22 6L18 17M12 13H19" stroke="#1a8a80" strokeWidth="2.600" /><path d="M19 8 26 3" stroke="#d33" strokeWidth="2.500" /><path d="M3 22.500H25" stroke="#1a7a72" strokeWidth="2.500" /></svg> },
  { v: ["Boursorama Banque", 188], m: "ml-[27px]", g: "gap-[8px]", icon: <svg viewBox="0 0 28 28" className="h-[28px] w-[28px] shrink-0"><path d="M1 1H22L18 9H3Z" fill="#f5168b" /><path d="M16 3 26 1 10 27H2Z" fill="#00a6e0" /><path d="M17 2H26V12L19 10Z" fill="#0a3180" /><path d="M17 12 26 10V27H19Z" fill="#e2107f" /></svg> },
  { v: ["Commande groupée ...", 214], m: "ml-[21px]", g: "gap-[13px]", icon: <span className="flex h-[28px] w-[28px] shrink-0 items-center justify-center rounded-[2px] bg-[#6a1fb8]"><svg viewBox="0 0 14 12" className="h-[12px] w-[14px]" stroke="#fff" strokeWidth="1.600"><path d="M0 1.500H2M4 1.500H14M0 6H2M4 6H14M0 10.500H2M4 10.500H14" /></svg></span> },
  { v: ["Facebook", 89], m: "ml-[16px]", g: "gap-[8px]", sep: true, icon: <span className="flex h-[28px] w-[28px] shrink-0 items-end justify-end rounded-[3px] bg-[#4267b2] pr-[4px]"><FaFacebookF className="h-[24px] w-[15px] text-white" /></span> },
  { v: ["DIY GnuVario : variom...", 219], m: "ml-[22px]", g: "gap-[9px]", icon: <Diy /> },
  { v: ["Mosfet choice - Page ...", 217], m: "ml-[25px]", g: "gap-[12px]", icon: <svg viewBox="0 0 28 28" className="h-[28px] w-[28px] shrink-0" fill="none"><rect width="28" height="28" rx="2" fill="#d9300f" /><path d="M5 8C14 5 22 13 21 22M6 13C12 11 17 16 16 23M7 18C10 17 12 20 11 23M10 4C19 4 25 12 24 20" stroke="#fbd9d0" strokeWidth="2.200" /><circle cx="7" cy="22" r="2" fill="#fff" /></svg> },
];

function Browser() {
  return (
    <div className="flex h-[2090px] flex-col overflow-hidden bg-[#f9f9fa]">
      <div className="flex h-[58px] shrink-0 border-b border-[#0c0c18] bg-[#20223f] pl-[1px] text-[#a9a9b6]">
        {TABS.map((t, i) => (
          <div key={i} className={`flex w-[250.200px] shrink-0 items-center pl-[17px] ${t.on ? "-mb-px border-t-4 border-[#0a84ff] bg-[#f9f9fa] pb-[4px] text-[#4d4d55]" : "border-r border-[#4e5070] pt-[2px]"}`}>
            {t.icon && <div className="mr-[11px] flex h-[28px] w-[28px] shrink-0 items-center">{t.icon}</div>}
            <div className={`shrink-0 overflow-hidden mask-r-from-70% ${t.on ? "w-[186px]" : t.muted ? "w-[116px]" : "w-[149px]"}`}>
              <span className="block font-['Open_Sans',sans-serif] text-[20px] leading-[30px] tracking-[-0.5px] whitespace-nowrap">{t.t}</span>
            </div>
            {t.muted && (
              <svg viewBox="0 0 28 28" className="mx-[4px] h-[26px] w-[26px]"><path d="M3 10H8L15 4V24L8 18H3ZM18 9Q22 14 18 19M21 5Q28 14 21 23" fill="currentColor" stroke="currentColor" strokeWidth="1.500" /><path d="M2 26 25 2" stroke="#20223f" strokeWidth="5" /><path d="M2 26 25 2" stroke="currentColor" strokeWidth="2.200" /></svg>
            )}
            <svg viewBox="0 0 16 16" className="ml-[8px] h-[16px] w-[16px]"><path d="M1 1 15 15M15 1 1 15" stroke="currentColor" strokeWidth="2.600" strokeLinecap="round" /></svg>
          </div>
        ))}
        <div className="flex flex-1 items-center text-[#c0c0ca]">
          <svg viewBox="0 0 24 24" className="ml-[15px] h-[24px] w-[24px]"><path d="M12 1V23M1 12H23" stroke="currentColor" strokeWidth="3" strokeLinecap="round" /></svg>
          <div className="ml-auto h-px w-[15px] bg-[#a0a0ae]" />
          <svg viewBox="0 0 16 16" className="ml-[54px] h-[16px] w-[16px]" fill="none" stroke="#a0a0ae"><path d="M1 4.500H11.500V15H1ZM4 4.500V1H15V12H11.500" /></svg>
          <CloseX className="mr-[29px] ml-[52px] h-[16px] w-[16px] text-[#a0a0ae]" />
        </div>
      </div>

      <div className="flex h-[70px] shrink-0 items-center text-[#4a4a4f]">
        <div className="ml-[6px] flex h-[60px] w-[60px] shrink-0 items-center justify-center rounded-full border border-[#b5b5b8] bg-white">
          <svg viewBox="0 0 28 28" className="h-[28px] w-[28px]" fill="none" stroke="currentColor" strokeWidth="3" strokeLinecap="round"><path d="M27 14H2M13 3 2 14 13 25" /></svg>
        </div>
        <svg viewBox="0 0 28 28" className="ml-[15px] h-[28px] w-[28px] text-[#b4b4b8]" fill="none" stroke="currentColor" strokeWidth="3" strokeLinecap="round"><path d="M1 14H26M15 3 26 14 15 25" /></svg>
        <svg viewBox="0 0 28 28" className="ml-[30px] h-[28px] w-[28px]" fill="none" stroke="currentColor" strokeWidth="3.400" strokeLinecap="round"><path d="M23 20A11 11 0 1 1 22 7" /><path d="M26 1V12H15Z" fill="currentColor" stroke="none" /></svg>
        <svg viewBox="0 0 28 28" className="ml-[26px] h-[30px] w-[30px]" fill="none" stroke="currentColor" strokeWidth="3" strokeLinejoin="round"><path d="M1.500 14 14 1.500 26.500 14M5.500 12V26.500H22.500V12M14 17V26M14 17H16V26" /></svg>
        <div className="ml-[221px] flex h-[53px] w-[2828px] shrink-0 items-center rounded-[4px] border-2 border-[#b9b9bd] bg-white text-[#737373] shadow-sm">
          <svg viewBox="0 0 24 26" className="ml-[12px] h-[25px] w-[22px]" fill="none" stroke="#5f5f63" strokeWidth="3"><path d="M2 4Q12 0 22 4C22 14 20 20 12 24 4 20 2 14 2 4Z" /><path d="M12 7V19Q8 16 8 7Z" fill="#5f5f63" stroke="none" /></svg>
          <div className="mx-[13px] h-[38px] w-px bg-[#dcdcdf]" />
          <svg viewBox="0 0 22 26" className="h-[26px] w-[22px]" fill="#5f5f63"><rect x="1" y="11" width="20" height="14" rx="2" /><path d="M5 12V8A6 6 0 0 1 17 8V12" fill="none" stroke="#5f5f63" strokeWidth="3" /></svg>
          <div className="mt-[2px] ml-[19px] flex">
            <T v={["https://", 79]} f="seg28" />
            <T v={["ratamuse.github.io", 200]} f="seg28" className="text-[#0c0c0d]" />
            <T v={["/GNUVario-TTGO-T5-website-anglais/slicer/slicer_bottom.html", 670]} f="seg28" />
          </div>
          <svg viewBox="0 0 26 28" className="ml-auto h-[29px] w-[26px]" fill="none" stroke="#5f5f63" strokeWidth="3"><rect x="2" y="2" width="22" height="24" rx="3" /><path d="M8 8H18M8 12H18M8 16H18M8 20H14" strokeWidth="1.800" /></svg>
          <div className="mr-[22px] ml-[23px] h-[38px] w-px bg-[#dcdcdf]" />
          <svg viewBox="0 0 28 8" className="h-[8px] w-[28px]" fill="#5f5f63"><circle cx="4" cy="4" r="3.200" /><circle cx="14" cy="4" r="3.200" /><circle cx="24" cy="4" r="3.200" /></svg>
          <svg viewBox="0 0 28 26" className="ml-[21px] h-[26px] w-[28px]" fill="none" stroke="#5f5f63" strokeWidth="3"><path d="M2 2H26V12A12 12 0 0 1 2 12Z" /><path d="M8 9.500 14 15.500 20 9.500" strokeLinecap="round" /></svg>
          <svg viewBox="0 0 28 28" className="mr-[8px] ml-[21px] h-[30px] w-[30px]" fill="none" stroke="#5f5f63" strokeWidth="2.800" strokeLinejoin="round"><path d="M14 2 17.500 10.500 26 11 19.500 17 21.500 26 14 21 6.500 26 8.500 17 2 11 10.500 10.500Z" /></svg>
        </div>
        <div className="ml-auto flex items-center">
          <svg viewBox="0 0 24 28" className="h-[30px] w-[24px]" fill="none" stroke="currentColor" strokeWidth="2.800" strokeLinecap="round"><path d="M12 1V19M4 12 12 20 20 12" /><path d="M3 26H21" strokeWidth="3.400" /></svg>
          <svg viewBox="0 0 28 28" className="ml-[32px] h-[28px] w-[28px]" fill="none" stroke="currentColor" strokeWidth="2.600" strokeLinecap="round"><path d="M2 3V25M7.500 3V25M13 3V25M18 3 26 25" /></svg>
          <svg viewBox="0 0 28 26" className="ml-[29px] h-[26px] w-[28px]" fill="none" stroke="currentColor" strokeWidth="3"><rect x="2" y="2" width="24" height="22" rx="4" /><path d="M13 2V24" /><path d="M6 7H9M6 11H9M6 15H9" strokeWidth="2" /></svg>
          <svg viewBox="0 0 28 28" className="ml-[29px] h-[28px] w-[28px]" fill="none"><path d="M17 26H20C27 21 29 12 23 6 17 0 8 3 5 8 3 12 3 16 4 19M19 26H27" stroke="#3b4062" strokeWidth="3.600" /><circle cx="7" cy="21" r="7" fill="#45c04a" /></svg>
          <svg viewBox="0 0 28 28" className="ml-[29px] h-[26px] w-[26px]" fill="none" stroke="currentColor"><circle cx="14" cy="14" r="12" strokeWidth="2.200" /><circle cx="14" cy="10" r="4.500" fill="currentColor" /><path d="M6 17Q14 20 22 17 20 23 14 23 8 23 6 17Z" fill="currentColor" /></svg>
          <div className="mr-[27px] ml-[21px] h-[60px] w-px bg-[#dcdcdf]" />
          <svg viewBox="0 0 22 22" className="mr-[24px] h-[22px] w-[22px]" stroke="currentColor" strokeWidth="3" strokeLinecap="round"><path d="M2 2H20M2 11H20M2 20H20" /></svg>
        </div>
      </div>

      <div className="flex h-[41px] shrink-0 items-center border-b border-[#d8d9dc] text-[#15141a]">
        {MARKS.map((m, i) => (
          <React.Fragment key={i}>
            {m.sep && <div className="ml-[21px] h-[30px] w-px shrink-0 bg-[#8f8f94]" />}
            <div className={`flex shrink-0 items-center ${m.m} ${m.g}`}>
              {m.icon}
              <T v={m.v} f="seg21" />
            </div>
          </React.Fragment>
        ))}
        <svg viewBox="0 0 24 20" className="mr-[24px] ml-auto h-[20px] w-[24px]" fill="none" stroke="#4a4a4f" strokeWidth="2.800"><path d="M3 1 12 10 3 19M13 1 22 10 13 19" /></svg>
      </div>

      <div className="flex min-h-0 flex-1">
        <div className="flex flex-1 flex-col items-center overflow-hidden bg-[#ebeff2]">
          <div className="flex w-[1658px] shrink-0 flex-col text-[#111]">
            <Dialog className="relative h-[54px] rounded-b-[18px] [zoom:1.672] after:absolute after:top-0 after:right-0 after:h-[42px] after:w-px after:bg-[#5a5a5a]">
              <div className="ml-[20px] h-[4px] w-[950px] shrink-0 border-x border-b border-[#dcdcdc] bg-white" />
              <DialogFoot d={FR} />
            </Dialog>
            <div className="flex h-[105px] items-center"><T v={["Onglet “Addition”", 298]} f="head" /></div>
            <div className="mb-[21px] flex h-[59px] items-center"><T v={["Adding a skirt around the case, just to purge the nozzle.", 870]} f="body" /></div>
            <Dialog className="h-[691px] rounded-[18px] [zoom:1.672]">
              <DialogTop d={FR} />
              <DialogTabs d={FR} />
              <DialogFoot d={FR} />
            </Dialog>
            <div className="flex h-[105px] items-center"><T v={["Onglet “Remplissage”:", 372]} f="head" /></div>
            <div className="mb-[21px] flex h-[59px] items-center"><T v={["Choice of 40% material and a honeycomb filling.", 755]} f="body" /></div>
            <Dialog className="h-[240px] rounded-t-[18px] [zoom:1.672]">
              <DialogTop d={FR} />
            </Dialog>
          </div>
        </div>
        <div className="flex w-[31px] shrink-0 flex-col items-center border-l border-[#dcdcdc] bg-[#f0f0f0] py-[12px]">
          <svg viewBox="0 0 14 9" className="h-[10px] w-[14px]" fill="none" stroke="#505050" strokeWidth="2.400"><path d="M1 8 7 2 13 8" /></svg>
          <div className="mt-[507px] h-[174px] w-full bg-[#cdcdcd]" />
          <svg viewBox="0 0 14 9" className="mt-auto h-[10px] w-[14px]" fill="none" stroke="#505050" strokeWidth="2.400"><path d="M1 1 7 7 13 1" /></svg>
        </div>
      </div>
    </div>
  );
}

export default function App() {
  return (
    <div className="h-[1603px] w-[4096px] overflow-hidden bg-black">
      <div className="flex h-[2160.500px] w-[5520px] [zoom:0.74203]">
        <div className="relative h-[1050px] w-[1680px] shrink-0 overflow-hidden">
          <Slicer />
          <Dialog className="absolute top-[103px] left-[358px] h-[693px] w-[994px] border border-[#55656f] shadow-[0_6px_22px_4px_rgba(0,0,0,0.38)]">
            <DialogTop d={EN} />
            <DialogTabs d={EN} />
            <DialogFoot d={EN} />
          </Dialog>
          <Taskbar
            slot="w-[49px]"
            className="bg-linear-to-r from-[#22363f] from-60% to-[#1c2744]"
            start={
              <div className="mr-[1px] flex h-[39px] w-[343px] shrink-0 items-center self-end bg-[#f2f2f2] pl-[12px] text-[#444]">
                <svg viewBox="0 0 18 18" className="h-[17px] w-[17px]" fill="none" stroke="#222" strokeWidth="1.200"><circle cx="11.500" cy="6.500" r="5.500" /><path d="M7.500 10.500 .5 17.500" /></svg>
                <T v={["Taper ici pour rechercher", 163]} f="seg15" className="ml-[11px]" />
              </div>
            }
          />
        </div>
        <div className="flex w-[3840px] shrink-0 flex-col">
          <Browser />
          <Taskbar
            wide
            slot="w-[49.710px]"
            className="bg-[#22363f] [zoom:1.75]"
            start={
              <div className="flex w-[48px] shrink-0 items-center justify-center">
                <svg viewBox="0 0 18 18" className="h-[17px] w-[17px]" fill="none" stroke="#fff" strokeWidth="1.100"><circle cx="11.500" cy="6.500" r="5.500" /><path d="M7.500 10.500 .5 17.500" /></svg>
              </div>
            }
          />
        </div>
      </div>
    </div>
  );
}
